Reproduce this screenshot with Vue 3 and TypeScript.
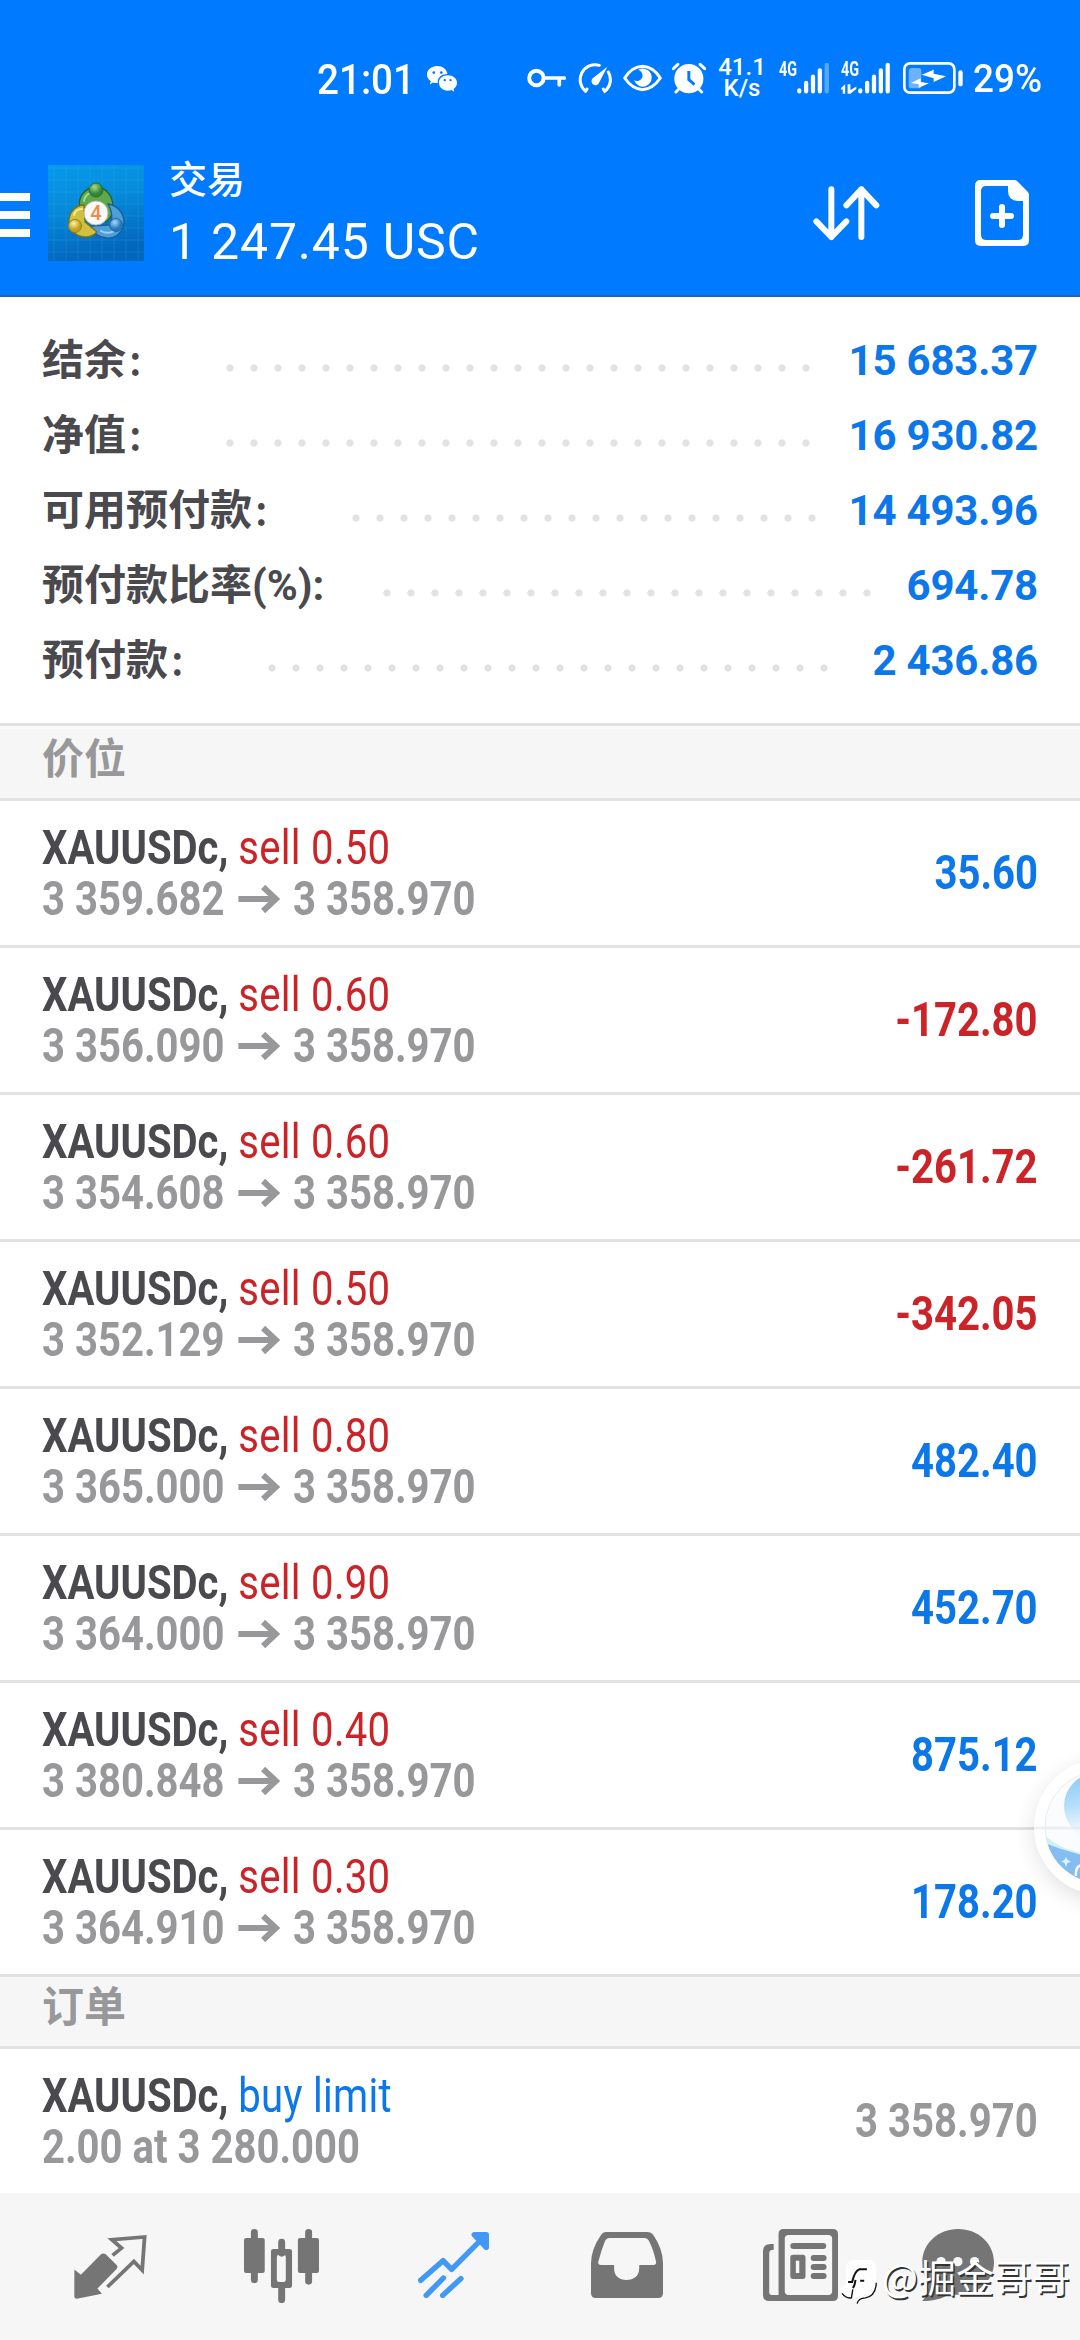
<script setup lang="ts">
interface SummaryLine {
  label: string
  suffix?: string
  value: string
  labelWidth: number
  dots: number
}

interface Position {
  volume: string
  open: string
  current: string
  profit: string
}

const DOT_PITCH = 24

const summary: SummaryLine[] = [
  { label: '结余', value: '15 683.37', labelWidth: 176, dots: 25 },
  { label: '净值', value: '16 930.82', labelWidth: 176, dots: 25 },
  { label: '可用预付款', value: '14 493.96', labelWidth: 302, dots: 20 },
  { label: '预付款比率', suffix: '(%):', value: '694.78', labelWidth: 333, dots: 21 },
  { label: '预付款', value: '2 436.86', labelWidth: 218, dots: 24 },
]

const current = '3 358.970'
const positions: Position[] = [
  { volume: '0.50', open: '3 359.682', current, profit: '35.60' },
  { volume: '0.60', open: '3 356.090', current, profit: '-172.80' },
  { volume: '0.60', open: '3 354.608', current, profit: '-261.72' },
  { volume: '0.50', open: '3 352.129', current, profit: '-342.05' },
  { volume: '0.80', open: '3 365.000', current, profit: '482.40' },
  { volume: '0.90', open: '3 364.000', current, profit: '452.70' },
  { volume: '0.40', open: '3 380.848', current, profit: '875.12' },
  { volume: '0.30', open: '3 364.910', current, profit: '178.20' },
]
</script>

<template>
  <div class="screen">
    <header class="header">
      <div class="status">
        <span class="clock">21:01</span>
        <svg class="wechat" viewBox="1237 107 88 79" preserveAspectRatio="none">
          <path fill="#fff" d="M1267 107c-17 0-30 11-30 26 0 8 4 15 11 20l-3 10 10-6c4 2 9 2 14 2 -3-15 9-28 28-28 -2-14-14-24-30-24z" />
          <path fill="#fff" d="M1298 135c-15 0-26 10-26 23s11 24 26 24c4 0 8-1 11-2l8 5-2-8c6-4 10-11 10-19 0-13-12-23-27-23z" />
          <g fill="#007aff"><circle cx="1257" cy="127" r="4" /><circle cx="1279" cy="127" r="4" /><circle cx="1289" cy="150" r="3.4" /><circle cx="1306" cy="150" r="3.4" /></g>
        </svg>
        <svg class="ic key" viewBox="52 66 116 96" preserveAspectRatio="none">
          <circle cx="80" cy="114" r="21.500" fill="none" stroke="#fff" stroke-width="12" />
          <path d="M102 114H163M148 114V135" fill="none" stroke="#fff" stroke-width="11" stroke-linecap="round" />
        </svg>
        <svg class="ic gauge" viewBox="203 66 102 96" preserveAspectRatio="none">
          <path d="M226 154A45 45 0 0 1 267 76M294 96A45 45 0 0 1 283 154L279 147M226 154L230 147" fill="none" stroke="#fff" stroke-width="9" stroke-linecap="round" />
          <path d="M291 80L267 127a12 12 0 1 1-20-12z" fill="#fff" />
        </svg>
        <svg class="ic eye" viewBox="338 66 116 96" preserveAspectRatio="none">
          <path d="M343 114Q365 80 396 79Q427 80 449 114Q427 147 396 149Q365 147 343 114Z" fill="none" stroke="#fff" stroke-width="9" stroke-linejoin="round" />
          <path d="M384 89a27 27 0 1 1-13 32c12 6 27-3 25-17c-1-7-5-12-12-15z" fill="#fff" />
        </svg>
        <svg class="ic alarm" viewBox="486 66 103 96" preserveAspectRatio="none">
          <circle cx="537" cy="116" r="44" fill="#fff" />
          <path d="M490 86L504 73M571 73L585 86M507 147L498 156M567 147L576 156" stroke="#fff" stroke-width="9" stroke-linecap="round" />
          <path d="M537 93V119L554 134" fill="none" stroke="#007aff" stroke-width="9" />
        </svg>
        <div class="speed"><span>41.1</span><span>K/s</span></div>
        <div class="net"><span>4G</span></div>
        <svg class="ic bars-a" viewBox="50 66 98 96" preserveAspectRatio="none">
          <g stroke="#fff" stroke-width="13" stroke-linecap="round"><path d="M57 151V154M78 129V154M99 110V154M120 91V154" /><path d="M141 75V154" opacity=".35" /></g>
        </svg>
        <div class="net second">
          <span>4G</span>
          <svg viewBox="182 132 46 28"><path d="M182 143L194 132V160H187V146L182 149ZM201 132H209V149L226 139V146L209 160H201Z" fill="#fff" /></svg>
        </div>
        <svg class="ic bars-b" viewBox="233 66 98 96" preserveAspectRatio="none">
          <path d="M240 151V154M261 129V154M282 110V154M303 91V154M324 75V154" stroke="#fff" stroke-width="13" stroke-linecap="round" />
        </svg>
        <svg class="ic battery" viewBox="368 66 180 96" preserveAspectRatio="none">
          <rect x="372" y="70" width="150" height="88" rx="17" fill="none" stroke="#fff" stroke-width="8" />
          <rect x="385" y="84" width="38" height="61" rx="8" fill="#fff" opacity=".42" />
          <rect x="534" y="91" width="13" height="48" rx="6.500" fill="#fff" />
          <path d="M424 104L460 89V101L497 109L460 126V115ZM392 129L421 115V126L446 130L415 143V133Z" fill="#fff" />
        </svg>
        <span class="percent">29%</span>
      </div>

      <div class="toolbar">
        <div class="menu"><i></i><i></i><i></i></div>
        <svg class="logo" viewBox="0 0 96 96">
          <defs>
            <linearGradient id="bg" x1="0" y1="0" x2=".25" y2="1"><stop offset="0" stop-color="#0799ec" /><stop offset=".45" stop-color="#068bda" /><stop offset="1" stop-color="#0366bd" /></linearGradient>
            <radialGradient id="green" cx=".4" cy=".3"><stop offset="0" stop-color="#a8dc86" /><stop offset="1" stop-color="#2f8437" /></radialGradient>
            <radialGradient id="gold" cx=".4" cy=".3"><stop offset="0" stop-color="#fff3a0" /><stop offset="1" stop-color="#c2a01b" /></radialGradient>
            <radialGradient id="azure" cx=".4" cy=".3"><stop offset="0" stop-color="#a5dcfb" /><stop offset="1" stop-color="#2479bd" /></radialGradient>
          </defs>
          <rect width="96" height="96" fill="url(#bg)" />
          <path d="M6 0V96M18 0V96M30 0V96M42 0V96M54 0V96M66 0V96M78 0V96M90 0V96M0 3H96M0 15H96M0 27H96M0 39H96M0 51H96M0 63H96M0 75H96M0 87H96" stroke="#3bb9f2" stroke-width=".8" opacity=".25" />
          <g stroke-width="1.300">
            <path d="M48 22C58 22 65 31 65 42C65 49 62 54 58 57L50 40H46L36 48C32 45 31 40 31.500 36C33 28 40 22 48 22Z" fill="#5fa84c" stroke="#245f2c" />
            <path d="M60 39C69 40 76 48 76 57C76 67 67 74 58 73C50 72 45 68 43 61L60 60C64 58 66 50 60 39Z" fill="#4c9fd8" stroke="#1a5b98" />
            <path d="M36 40C27 40 21 48 21 56C21 66 29 72 38 72C43 72 46 70 49 67L37 57Z" fill="#cfc03f" stroke="#7c701c" />
          </g>
          <g fill="none" stroke-width="2" stroke-linecap="round" opacity=".8">
            <path d="M36 36C37 29 42 27 48 27" stroke="#b5e39a" />
            <path d="M26 50C27 46 30 44 34 44" stroke="#fff6a8" />
            <path d="M53 66C60 70 68 67 71 60" stroke="#b2e0fb" />
          </g>
          <circle cx="48" cy="25" r="7" fill="url(#green)" stroke="#2a6e33" />
          <circle cx="27" cy="61" r="6.500" fill="url(#gold)" stroke="#94801c" />
          <circle cx="68" cy="60" r="6.500" fill="url(#azure)" stroke="#2068a6" />
          <circle cx="48" cy="48" r="12" fill="#fafafa" stroke="#bdb8a4" />
          <text x="48" y="55" text-anchor="middle" class="logo-num">4</text>
        </svg>
        <div class="titles">
          <div class="title">交易</div>
          <div class="amount">1 247.45 USC</div>
        </div>
        <svg class="sort" viewBox="158 107 200 165">
          <path d="M213 117V260M168 213L213 260L258 213M303 260V117M258 165L303 117L348 165" fill="none" stroke="#fff" stroke-width="18" stroke-linecap="round" stroke-linejoin="round" />
        </svg>
        <svg class="newdoc" viewBox="645 90 162 198">
          <path fill="#fff" fill-rule="evenodd" d="M662 90H762Q768 90 772 94L803 125Q807 129 807 135V271Q807 288 790 288H662Q645 288 645 271V107Q645 90 662 90ZM679 108Q663 108 663 124V254Q663 270 679 270H773Q789 270 789 254V153H775Q744 153 744 122V108Z" />
          <path d="M699 198H753M726 171V225" stroke="#fff" stroke-width="18" stroke-linecap="round" />
        </svg>
      </div>
    </header>

    <section class="summary">
      <div v-for="line in summary" :key="line.label" class="sum-row">
        <span class="sum-label" :style="{ width: line.labelWidth + 'px' }">{{ line.label }}<template v-if="line.suffix">{{ line.suffix }}</template><b v-else class="colon">:</b></span>
        <span class="dots" :style="{ width: line.dots * DOT_PITCH + 'px' }"></span>
        <span class="sum-value">{{ line.value }}</span>
      </div>
    </section>

    <div class="group first">价位</div>
    <div v-for="(p, i) in positions" :key="i" class="row">
      <div class="info">
        <div class="line"><b class="symbol">XAUUSDc,</b> <span class="sell">sell {{ p.volume }}</span></div>
        <div class="line prices">
          <span>{{ p.open }}</span>
          <svg class="arrow" viewBox="0 0 42 28" preserveAspectRatio="none"><path d="M0 14H38M25 2L38 14L25 26" fill="none" stroke="currentColor" stroke-width="6" /></svg>
          <span>{{ p.current }}</span>
        </div>
      </div>
      <div class="profit" :class="{ loss: p.profit.startsWith('-') }">{{ p.profit }}</div>
    </div>

    <div class="group">订单</div>
    <div class="row last">
      <div class="info">
        <div class="line"><b class="symbol">XAUUSDc,</b> <span class="buy">buy limit</span></div>
        <div class="line prices"><span>2.00 at 3 280.000</span></div>
      </div>
      <div class="profit market">{{ current }}</div>
    </div>

    <nav class="nav">
      <svg class="n1" viewBox="214 884 212 191" preserveAspectRatio="none">
        <path d="M215 987L234 1003L291 943Q299 936 307 942L337 973Q343 979 337 986L282 1044L295 1059L222 1074Q215 1074 215 1068Z" fill="#757575" />
        <path d="M326 945L352 923L324 898L419 890L412 989L388 963L311 1039" fill="none" stroke="#757575" stroke-width="11" />
      </svg>
      <svg class="n2" viewBox="709 867 217 222" preserveAspectRatio="none">
        <path d="M739 877V1019M896 877V1024M818 906V940M818 1040V1079" stroke="#757575" stroke-width="20" stroke-linecap="round" />
        <rect x="709" y="894" width="60" height="105" rx="6" fill="#757575" />
        <rect x="865" y="894" width="61" height="105" rx="6" fill="#757575" />
        <path fill="#757575" fill-rule="evenodd" d="M794 927H841Q848 927 848 934V1037Q848 1044 841 1044H794Q787 1044 787 1037V934Q787 927 794 927ZM811 944Q804 944 804 951V1019Q804 1026 811 1026H823Q830 1026 830 1019V951Q830 944 823 944Z" />
      </svg>
      <svg class="n3" viewBox="1213 876 207 198" preserveAspectRatio="none">
        <g fill="none" stroke="#4298f5" stroke-width="16" stroke-linecap="round" stroke-linejoin="round">
          <path d="M1221 1021L1286 962L1311 988L1402 894M1237 1066L1287 1014M1285 1066L1338 1016" />
          <path d="M1377 884H1412V922Z" fill="#4298f5" />
        </g>
      </svg>
      <svg class="n4" viewBox="147 876 209 198" preserveAspectRatio="none">
        <path fill="#757575" fill-rule="evenodd" d="M190 876H312Q322 876 328 885Q356 928 356 970V1060Q356 1074 342 1074H161Q147 1074 147 1060V970Q147 928 176 885Q181 876 190 876ZM200 894Q192 894 188 902Q177 930 168 966Q167 975 176 975H214V985C214 1009 229 1020 250 1020S287 1009 287 985V975H328Q337 975 336 966Q329 930 315 902Q311 894 303 894Z" />
      </svg>
      <svg class="n5" viewBox="646 867 217 216" preserveAspectRatio="none">
        <path fill="#757575" fill-rule="evenodd" d="M706 867H848Q863 867 863 882V1068Q863 1083 848 1083H664Q646 1083 646 1064V934Q646 912 668 912H677V929Q664 929 664 939V1057Q664 1065 672 1065H691V882Q691 867 706 867ZM720 885Q709 885 709 896V1054Q709 1065 720 1065H835Q846 1065 846 1054V896Q846 885 835 885ZM733 944H761Q769 944 769 952V1009Q769 1017 761 1017H733Q725 1017 725 1009V952Q725 944 733 944ZM741 962V999H751V962Z" />
        <path d="M734 918H820M793 954H821M793 981H821M793 1008H821" stroke="#757575" stroke-width="18" stroke-linecap="round" />
      </svg>
      <svg class="n6" viewBox="307 87 215 216" preserveAspectRatio="none">
        <path d="M415 87C475 87 522 131 522 187S475 284 415 284C406 284 397 284 389 282C363 299 337 303 307 303C320 292 326 276 326 257C314 236 308 212 308 187C308 131 355 87 415 87Z" fill="#757575" />
        <g fill="#f6f6f6"><circle cx="364" cy="185" r="14" /><circle cx="414" cy="185" r="14" /><circle cx="464" cy="185" r="14" /></g>
      </svg>
    </nav>

    <svg class="float" viewBox="0 0 100 180">
      <defs>
        <filter id="soft" x="-30%" y="-30%" width="160%" height="160%"><feGaussianBlur stdDeviation="11" /></filter>
        <clipPath id="ball"><circle cx="121" cy="87" r="56" /></clipPath>
        <linearGradient id="orb" x1="0" y1="0" x2=".2" y2="1"><stop offset="0" stop-color="#86c8f6" /><stop offset=".5" stop-color="#b4dffb" /><stop offset=".9" stop-color="#f4f9fd" /></linearGradient>
      </defs>
      <circle cx="123" cy="93" r="68" fill="#000" opacity=".12" filter="url(#soft)" />
      <circle cx="122" cy="87" r="68" fill="#fff" />
      <circle cx="121" cy="87" r="56" fill="#fbfcfe" stroke="#ececf0" />
      <g clip-path="url(#ball)">
        <circle cx="117" cy="66" r="33" fill="url(#orb)" />
        <path d="M60 91Q78 109 102 113V160H60Z" fill="#cdf1f4" />
        <path d="M62 102Q82 110 102 115V160H62Z" fill="#84bdf1" />
        <path d="M86 117L87.500 120L91 121.500L87.500 123L86 127L84.500 123L81 121.500L84.500 120Z" fill="#d8f5ff" />
        <path d="M96 136Q95 126 102 125" stroke="#fff" stroke-width="2.500" fill="none" />
      </g>
      <path d="M54 88H100" stroke="#dfe3e6" stroke-width="3" opacity=".5" />
    </svg>

    <div class="watermark">
      <svg viewBox="60 176 110 136">
        <path d="M98 178H148Q168 180 168 206V262Q160 290 134 296L112 308Q106 300 116 290L92 290Q64 286 62 262Q68 262 78 250V200Q80 182 98 178Z" fill="#fff" />
        <path d="M84 244H96Q104 210 118 206H140M120 240H132M98 262Q104 256 106 238" fill="none" stroke="#111" stroke-width="6" />
        <path d="M66 278Q78 294 94 291L98 266M168 246Q166 286 136 291Q114 292 111 308" fill="none" stroke="#111" stroke-width="4" />
      </svg>
      <span>@掘金哥哥</span>
    </div>
  </div>
</template>

<style>
body {
  margin: 0;
  background: #fff;
}
</style>

<style scoped>
.screen {
  position: relative;
  width: 1080px;
  height: 2340px;
  overflow: hidden;
  background: #fff;
  font-family: Roboto, 'Noto Sans CJK SC', sans-serif;
  color: #4a4a4e;
}
svg {
  display: block;
  flex: none;
}
.header {
  box-sizing: border-box;
  height: 297px;
  background: #007aff;
  border-bottom: 2px solid #1b68b8;
  color: #fff;
}
.status {
  display: flex;
  align-items: flex-start;
  height: 94px;
  padding-top: 62px;
  box-sizing: border-box;
  margin-bottom: 67px;
}
.status > * {
  flex: none;
}
.clock {
  width: 110px;
  margin-left: 317px;
  line-height: 36px;
  font-size: 42px;
  font-weight: 500;
  transform: scaleX(0.92);
  transform-origin: left;
}
.wechat {
  width: 30px;
  height: 26px;
  margin-top: 4px;
}
.ic {
  height: 32px;
}
.key {
  width: 39px;
  margin-left: 70px;
}
.gauge {
  width: 34px;
  margin-left: 12px;
}
.eye {
  width: 39px;
  margin-left: 11px;
}
.alarm {
  width: 34px;
  margin-left: 10px;
}
.speed {
  display: flex;
  flex-direction: column;
  align-items: center;
  width: 46px;
  margin-left: 13px;
  margin-top: -5px;
  font-size: 24px;
  font-weight: 500;
  line-height: 21px;
}
.net {
  width: 18px;
  margin-left: 14px;
  font-size: 19.500px;
  font-weight: 700;
  line-height: 15px;
}
.net span {
  display: block;
  transform: scaleX(0.74);
  transform-origin: left;
}
.net svg {
  width: 16px;
  height: 10px;
  margin-top: 7px;
}
.bars-a,
.bars-b {
  width: 32px;
}
.net.second {
  width: 17px;
  margin-left: 12px;
}
.battery {
  width: 60px;
  margin-left: 13px;
}
.percent {
  margin-left: 10px;
  font-size: 38px;
  font-weight: 500;
  line-height: 34px;
  transform: scaleX(0.97);
  transform-origin: left;
}
.toolbar {
  display: flex;
  align-items: flex-start;
}
.menu {
  display: flex;
  flex-direction: column;
  gap: 10px;
  width: 30px;
  margin-top: 32px;
}
.menu i {
  height: 8px;
  background: #fff;
}
.logo {
  width: 96px;
  height: 96px;
  margin: 4px 0 0 18px;
}
.logo-num {
  font-size: 20px;
  font-weight: 500;
  fill: #f08a45;
}
.titles {
  width: 644px;
  margin-left: 25px;
}
.title {
  height: 38px;
  line-height: 38px;
  font-size: 38px;
  font-weight: 500;
}
.amount {
  margin-top: 13px;
  line-height: 60px;
  font-size: 50px;
  letter-spacing: 0.8px;
  white-space: nowrap;
}
.sort {
  width: 66.700px;
  height: 55px;
  margin-top: 25px;
}
.newdoc {
  width: 54px;
  height: 66px;
  margin: 19px 0 0 95px;
}
.summary {
  padding: 26px 42px 25px;
}
.sum-row {
  display: flex;
  height: 75px;
  line-height: 75px;
  font-size: 42px;
  font-weight: 700;
}
.sum-label {
  flex: none;
  white-space: nowrap;
}
.colon {
  margin-left: 3px;
  font-family: 'Noto Sans CJK SC', sans-serif;
  font-weight: 500;
  line-height: 0;
}
.dots {
  flex: none;
  height: 24px;
  margin-top: 33px;
  background: radial-gradient(circle at center, #e2e2e4 3.2px, transparent 4px) 0 0 / 24px 24px;
}
.sum-value {
  flex: 1;
  text-align: right;
  color: #0c77e9;
  letter-spacing: -0.2px;
}
.group {
  height: 69px;
  padding-left: 42px;
  border-bottom: 3px solid #e2e2e2;
  background: #f6f6f6;
  line-height: 61px;
  font-size: 42px;
  font-weight: 700;
  color: #98989a;
}
.group.first {
  margin-top: 6px;
  box-shadow: 0 -3px #fafafa, 0 -6px #e2e2e2;
}
.row {
  display: flex;
  justify-content: space-between;
  height: 144px;
  padding: 0 42px;
  border-bottom: 3px solid #e2e2e2;
  font-size: 48px;
}
.row.last {
  border-bottom: 0;
}
.info {
  padding-top: 21px;
}
.line {
  height: 51px;
  line-height: 51px;
  white-space: nowrap;
  transform: scaleX(0.835);
  transform-origin: left;
}
.symbol {
  font-weight: 700;
}
.sell,
.buy {
  letter-spacing: 0.35px;
}
.sell {
  color: #cb2428;
}
.buy {
  color: #0c77e9;
}
.prices {
  display: flex;
  align-items: center;
  font-weight: 700;
  color: #98989b;
}
.arrow {
  width: 50px;
  height: 28px;
  margin: 0 16px;
}
.profit {
  line-height: 144px;
  font-weight: 700;
  color: #0c77e9;
  transform: scaleX(0.835);
  transform-origin: right;
}
.profit.loss {
  color: #cb2428;
}
.profit.market {
  color: #98989b;
}
.nav {
  display: flex;
  align-items: flex-start;
  height: 147px;
  background: #f6f6f6;
}
.n1 {
  width: 73px;
  height: 64px;
  margin: 42px 0 0 74px;
}
.n2 {
  width: 75px;
  height: 74px;
  margin: 36px 0 0 97px;
}
.n3 {
  width: 71px;
  height: 66px;
  margin: 39px 0 0 99px;
}
.n4 {
  width: 72px;
  height: 66px;
  margin: 39px 0 0 102px;
}
.n5 {
  width: 75px;
  height: 72px;
  margin: 36px 0 0 100px;
}
.n6 {
  width: 72px;
  height: 72px;
  margin: 36px 0 0 84px;
}
.float {
  position: absolute;
  right: 0;
  top: 1740px;
  width: 100px;
  height: 180px;
}
.watermark {
  position: absolute;
  left: 840px;
  top: 2256px;
  display: flex;
  align-items: flex-start;
  color: #fff;
  font-size: 38px;
  line-height: 40px;
  font-family: 'Noto Sans CJK SC', sans-serif;
  white-space: nowrap;
  text-shadow: 1.500px 1.500px 0.500px #333;
}
.watermark svg {
  width: 37px;
  height: 46px;
  margin: 3px 5px 0 0;
}
</style>
